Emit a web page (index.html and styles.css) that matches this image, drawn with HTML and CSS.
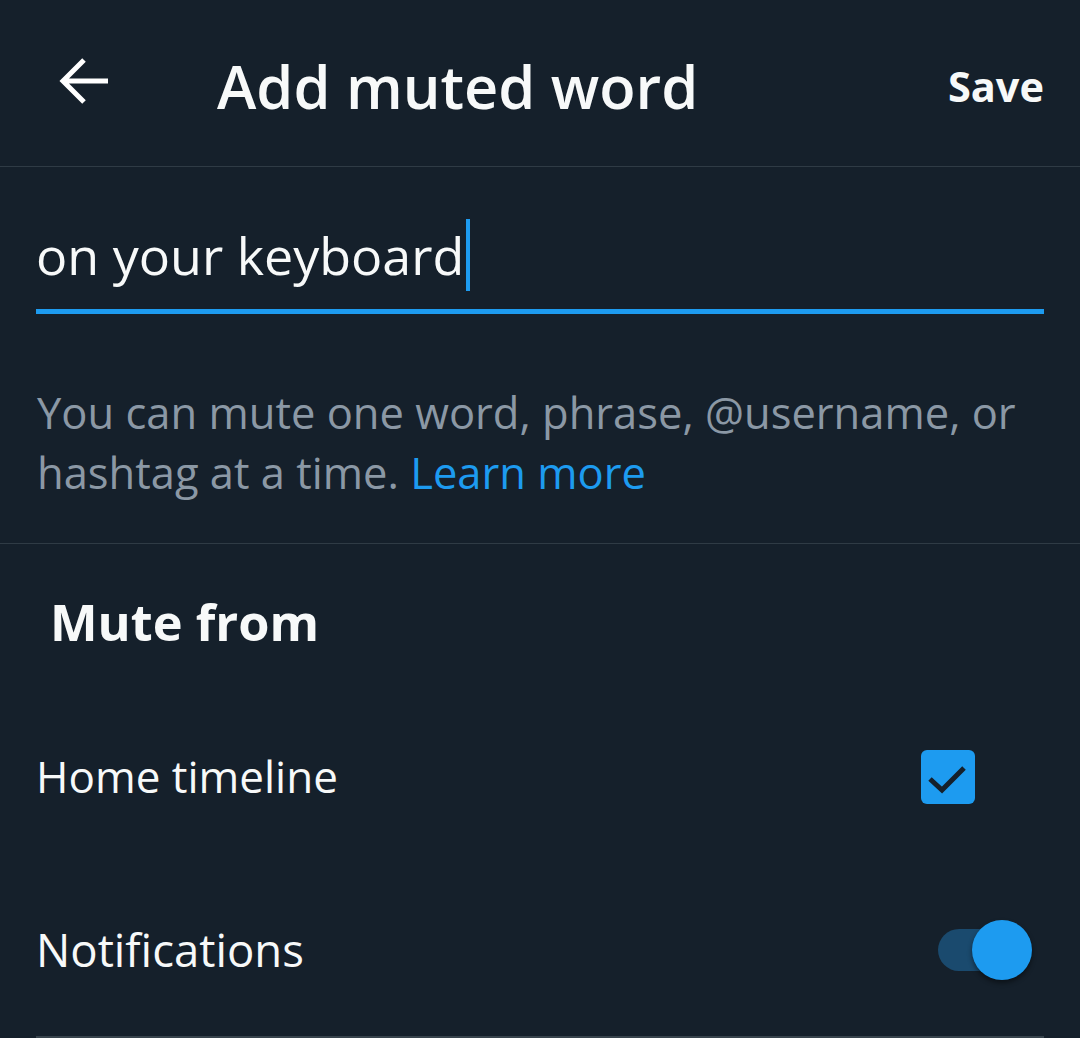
FILE: index.html
```html
<!DOCTYPE html>
<html>
<head>
<meta charset="utf-8">
<link rel="stylesheet" href="styles.css">
</head>
<body>
  <div class="screen">
    <div class="topbar">
      <span class="back">
        <svg width="56" height="56" viewBox="0 0 56 56">
          <path d="M52 28H8M28 7L7 28l21 21" fill="none" stroke="#fff" stroke-width="5"/>
        </svg>
      </span>
      <div class="title">Add muted word</div>
      <div class="save">Save</div>
    </div>

    <div class="field">
      <div class="field-text">on your keyboard<span class="caret"></span></div>
    </div>

    <p class="hint">You can mute one word, phrase, @username, or hashtag at a time. <a class="link">Learn more</a></p>

    <div class="section">
      <h2 class="section-title">Mute from</h2>

      <div class="row">
        <span class="row-label">Home timeline</span>
        <span class="checkbox">
          <svg width="54" height="54" viewBox="0 0 54 54">
            <path d="M9 29l12 11 22-22" fill="none" stroke="#15202b" stroke-width="5"/>
          </svg>
        </span>
      </div>

      <div class="row">
        <span class="row-label">Notifications</span>
        <span class="switch"><span class="knob"></span></span>
      </div>
    </div>
  </div>
</body>
</html>
```

FILE: styles.css
```css
html, body {
  margin: 0;
  background: #15202b;
}

.screen {
  font-family: "Open Sans", Inter, sans-serif;
  color: #f7f9f9;
  height: 1038px;
  overflow: hidden;
}

/* header */
.topbar {
  height: 166px;
  display: flex;
  align-items: center;
  border-bottom: 1px solid #2f3b45;
  padding: 0 36px 0 56px;
}
.back { width: 56px; height: 56px; margin-right: 105px; margin-top: -4px; }
.title {
  flex: 1;
  font-size: 59.5px;
  font-weight: 600;
  margin-top: 4px;
}
.save { font-size: 41.5px; font-weight: 700; margin-top: 6px; }

/* input */
.field {
  margin: 0 36px;
  height: 142px;
  border-bottom: 5px solid #1d9bf0;
  display: flex;
  align-items: flex-end;
}
.field-text {
  font-size: 52px;
  line-height: 72px;
  margin-bottom: 18px;
  display: flex;
  align-items: center;
}
.caret {
  display: inline-block;
  width: 4px;
  height: 72px;
  background: #1d9bf0;
  margin-left: 2px;
}

.hint {
  margin: 0;
  padding: 69px 36px 40px 37px;
  font-size: 43.5px;
  line-height: 60px;
  color: #8b98a5;
  border-bottom: 1px solid #2f3b45;
}
.link { color: #1d9bf0; text-decoration: none; }

/* mute from */
.section { padding: 0 36px; }
.section-title {
  margin: 0;
  padding: 48px 0 0 14px;
  font-size: 50.5px;
  font-weight: 700;
  line-height: 60px;
}
.row {
  height: 173px;
  display: flex;
  align-items: center;
  justify-content: space-between;
  font-size: 44px;
}
.row:first-of-type { margin-top: 38px; }
.row + .row { border-bottom: 2px solid #38444d; }
.row-label { margin-top: -2px; }
.row + .row .row-label { font-size: 45.5px; }

.checkbox {
  width: 54px;
  height: 54px;
  border-radius: 6px;
  background: #1d9bf0;
  margin-right: 69px;
}

.switch {
  position: relative;
  width: 72px;
  height: 42px;
  border-radius: 21px;
  background: #1a4a6e;
  margin-right: 34px;
}
.knob {
  position: absolute;
  right: -22px;
  top: -9px;
  width: 60px;
  height: 60px;
  border-radius: 50%;
  background: #1d9bf0;
  box-shadow: 0 3px 5px rgba(0,0,0,0.45);
}
```
